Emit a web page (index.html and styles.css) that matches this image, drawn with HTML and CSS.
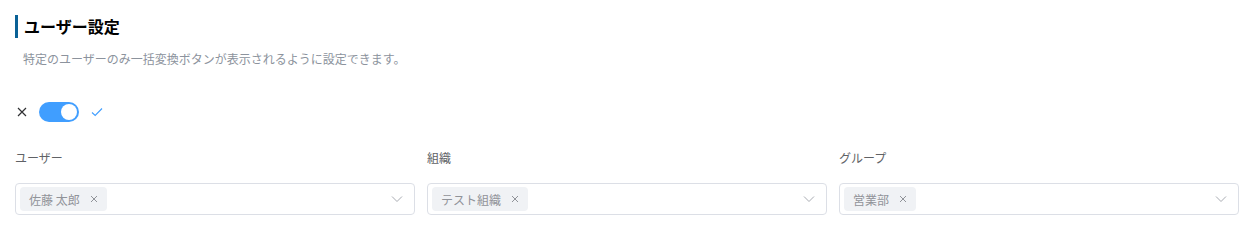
FILE: index.html
```html
<!DOCTYPE html>
<html lang="ja">
<head>
<meta charset="utf-8">
<link rel="stylesheet" href="styles.css">
</head>
<body>
<div class="page">
  <h2 class="title">ユーザー設定</h2>
  <p class="desc">特定のユーザーのみ一括変換ボタンが表示されるように設定できます。</p>
  <div class="switch-row">
    <span class="sw-label off">
      <svg width="10" height="10" viewBox="0 0 10 10"><path d="M1 1L9 9M9 1L1 9" stroke="currentColor" stroke-width="1.2" fill="none"/></svg>
    </span>
    <span class="switch"><span class="knob"></span></span>
    <span class="sw-label on">
      <svg width="12" height="10" viewBox="0 0 12 10"><path d="M1 5.5L4.2 8.5L11 1.5" stroke="currentColor" stroke-width="1.1" fill="none"/></svg>
    </span>
  </div>
  <div class="fields">
    <div class="field">
      <div class="label">ユーザー</div>
      <div class="select">
        <span class="tag">佐藤 太郎<svg class="tag-x" width="8" height="8" viewBox="0 0 8 8"><path d="M1 1L7 7M7 1L1 7" stroke="currentColor" stroke-width="1" fill="none"/></svg></span>
        <svg class="chev" width="12" height="8" viewBox="0 0 12 8"><path d="M1 1.5L6 6.5L11 1.5" stroke="currentColor" stroke-width="1" fill="none"/></svg>
      </div>
    </div>
    <div class="field">
      <div class="label">組織</div>
      <div class="select">
        <span class="tag">テスト組織<svg class="tag-x" width="8" height="8" viewBox="0 0 8 8"><path d="M1 1L7 7M7 1L1 7" stroke="currentColor" stroke-width="1" fill="none"/></svg></span>
        <svg class="chev" width="12" height="8" viewBox="0 0 12 8"><path d="M1 1.5L6 6.5L11 1.5" stroke="currentColor" stroke-width="1" fill="none"/></svg>
      </div>
    </div>
    <div class="field">
      <div class="label">グループ</div>
      <div class="select">
        <span class="tag">営業部<svg class="tag-x" width="8" height="8" viewBox="0 0 8 8"><path d="M1 1L7 7M7 1L1 7" stroke="currentColor" stroke-width="1" fill="none"/></svg></span>
        <svg class="chev" width="12" height="8" viewBox="0 0 12 8"><path d="M1 1.5L6 6.5L11 1.5" stroke="currentColor" stroke-width="1" fill="none"/></svg>
      </div>
    </div>
  </div>
</div>
</body>
</html>
```
FILE: styles.css
```css
html, body {
  margin: 0;
  background: #ffffff;
}
body {
  font-family: "Noto Sans CJK JP", "Noto Sans", sans-serif;
  color: #303133;
}
.page {
  padding: 15px 20px 0 15px;
}
.title {
  margin: 0;
  border-left: 3px solid #0a6196;
  padding-left: 6px;
  height: 23px;
  line-height: 23px;
  font-size: 16px;
  font-weight: 700;
  color: #000000;
}
.desc {
  margin: 13px 0 0 8px;
  font-size: 12px;
  line-height: 16px;
  color: #8c939d;
}
.switch-row {
  display: flex;
  align-items: center;
  margin-top: 35px;
  height: 20px;
}
.sw-label {
  display: flex;
  align-items: center;
}
.sw-label.off {
  color: #303133;
  margin-left: 2px;
  margin-right: 12px;
}
.sw-label.on {
  color: #409eff;
  margin-left: 12px;
}
.switch {
  width: 40px;
  height: 20px;
  border-radius: 10px;
  background: #409eff;
  display: flex;
  align-items: center;
  justify-content: flex-end;
  padding: 0 2px;
  box-sizing: border-box;
}
.knob {
  width: 16px;
  height: 16px;
  border-radius: 50%;
  background: #ffffff;
}
.fields {
  display: grid;
  grid-template-columns: repeat(3, 400px);
  column-gap: 12px;
  margin-top: 28px;
}
.label {
  font-size: 12px;
  line-height: 16px;
  color: #606266;
  height: 16px;
}
.select {
  margin-top: 17px;
  height: 32px;
  box-sizing: border-box;
  border: 1px solid #dcdfe6;
  border-radius: 4px;
  display: flex;
  align-items: center;
  padding: 0 11px 0 4px;
}
.tag {
  display: inline-flex;
  align-items: center;
  height: 24px;
  padding: 0 9px;
  background: #f0f2f5;
  border-radius: 4px;
  font-size: 12px;
  color: #909399;
}
.tag-x {
  margin-left: 10px;
  color: #909399;
}
.chev {
  margin-left: auto;
  color: #a8abb2;
}
```
